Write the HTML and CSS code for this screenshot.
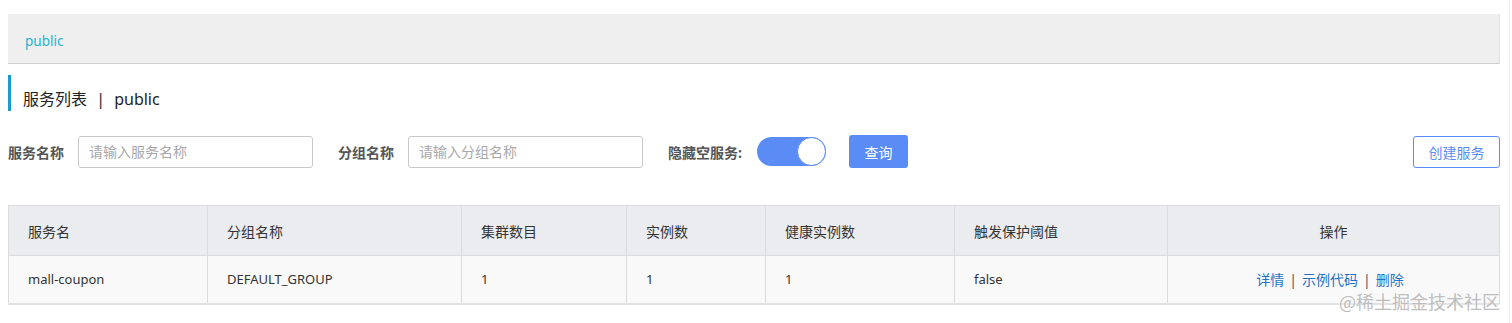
FILE: index.html
```html
<!DOCTYPE html>
<html lang="zh-CN">
<head>
    <meta charset="UTF-8">
    <title>服务列表</title>
    <link rel="stylesheet" href="styles.css">
</head>
<body>
    <div class="page">
        <div class="namespace-bar">
            <span class="namespace">public</span>
        </div>

        <div class="page-title">服务列表 <span class="sep">|</span> public</div>

        <div class="filters">
            <label class="filter-label">服务名称</label>
            <input class="filter-input" type="text" placeholder="请输入服务名称">
            <label class="filter-label gap">分组名称</label>
            <input class="filter-input" type="text" placeholder="请输入分组名称">
            <label class="filter-label gap">隐藏空服务:</label>
            <div class="switch"><span class="knob"></span></div>
            <button class="btn-primary">查询</button>
            <button class="btn-outline">创建服务</button>
        </div>

        <table class="service-table">
            <thead>
                <tr>
                    <th class="c1">服务名</th>
                    <th class="c2">分组名称</th>
                    <th class="c3">集群数目</th>
                    <th class="c4">实例数</th>
                    <th class="c5">健康实例数</th>
                    <th class="c6">触发保护阈值</th>
                    <th class="c7 center">操作</th>
                </tr>
            </thead>
            <tbody>
                <tr>
                    <td>mall-coupon</td>
                    <td>DEFAULT_GROUP</td>
                    <td>1</td>
                    <td>1</td>
                    <td>1</td>
                    <td>false</td>
                    <td class="center ops">
                        <a class="op">详情</a><span class="op-sep">|</span><a class="op">示例代码</a><span class="op-sep">|</span><a class="op">删除</a>
                    </td>
                </tr>
            </tbody>
        </table>
    </div>
    <div class="watermark">@稀土掘金技术社区</div>
    <div class="edge"></div>
</body>
</html>
```

FILE: styles.css
```css
* {
    margin: 0;
    padding: 0;
    box-sizing: border-box;
}
body {
    margin: 8px;
    font-family: "Noto Sans", "Noto Sans CJK SC", sans-serif;
    font-size: 14px;
    color: #333;
    background: #fff;
}
.page {
    width: 1492px;
}
.namespace-bar {
    margin-top: 6px;
    height: 50px;
    padding: 5px 17px 0;
    background-color: #efefef;
    border-bottom: 1px solid #cfcfcf;
    border-right: 1px solid #e2e2e2;
}
.namespace {
    line-height: 44px;
    color: #1fb4d2;
    font-size: 13.5px;
}
.page-title {
    margin-top: 11px;
    height: 36px;
    padding: 12px 0 0 12px;
    border-left: 3px solid #1a9bd0;
    font-size: 16px;
    line-height: 24px;
    color: #222;
}
.page-title .sep {
    margin: 0 5px;
}
.filters {
    margin-top: 24px;
    display: flex;
    align-items: center;
    height: 33px;
}
.filter-label {
    font-weight: 700;
    color: #555;
    font-size: 14px;
    margin-right: 14px;
}
.filter-label.gap {
    margin-left: 25px;
}
.filter-input {
    width: 235px;
    height: 32px;
    border: 1px solid #c8c8c8;
    border-radius: 3px;
    padding: 0 10px;
    font-family: inherit;
    font-size: 14px;
    color: #333;
}
.filter-input::placeholder {
    color: #a8a8a8;
}
.switch {
    margin-left: 1px;
    width: 69px;
    height: 29px;
    border-radius: 15px;
    background-color: #5b8cf6;
    display: flex;
    justify-content: flex-end;
}
.knob {
    width: 29px;
    height: 29px;
    border-radius: 50%;
    background: #fff;
    border: 1px solid #5b8cf6;
}
.btn-primary {
    margin-left: 23px;
    width: 59px;
    height: 33px;
    border: none;
    border-radius: 3px;
    background-color: #5b8cf6;
    color: #fff;
    font-family: inherit;
    font-size: 14px;
}
.btn-outline {
    margin-left: auto;
    width: 87px;
    height: 32px;
    border: 1px solid #5b8cf6;
    border-radius: 3px;
    background: #fff;
    color: #5b8cf6;
    font-family: inherit;
    font-size: 14px;
}
.service-table {
    margin-top: 37px;
    width: 1491px;
    border-collapse: collapse;
    table-layout: fixed;
    border: 1px solid #dcdcdc;
    border-bottom: 2px solid #e2e2e2;
}
.service-table th,
.service-table td {
    border: 1px solid #dcdcdc;
    text-align: left;
    padding: 0 19px;
    font-weight: 400;
    font-size: 14px;
    color: #333;
}
.service-table th {
    height: 50px;
    background-color: #ebecef;
}
.service-table td {
    height: 48px;
    font-size: 13px;
    background-color: #f9f9fa;
}
.service-table .center {
    text-align: center;
}
.service-table td.ops {
    font-size: 14px;
    padding: 0 26px 0 19px;
}
.c1 { width: 199px; }
.c2 { width: 254px; }
.c3 { width: 165px; }
.c4 { width: 139px; }
.c5 { width: 189px; }
.c6 { width: 213px; }
.c7 { width: 332px; }
.op {
    color: #1f73c6;
    cursor: pointer;
}
.op-sep {
    color: #555;
    margin: 0 5px;
}
.watermark {
    position: absolute;
    left: 1339px;
    top: 289px;
    font-size: 18px;
    line-height: 24px;
    color: #bdbdbd;
    font-family: "Noto Sans CJK SC", sans-serif;
    text-shadow: 0 0 2px #fff;
}
.edge {
    position: fixed;
    top: 0;
    bottom: 0;
    left: 1509px;
    width: 1px;
    background: #ececec;
}
```
